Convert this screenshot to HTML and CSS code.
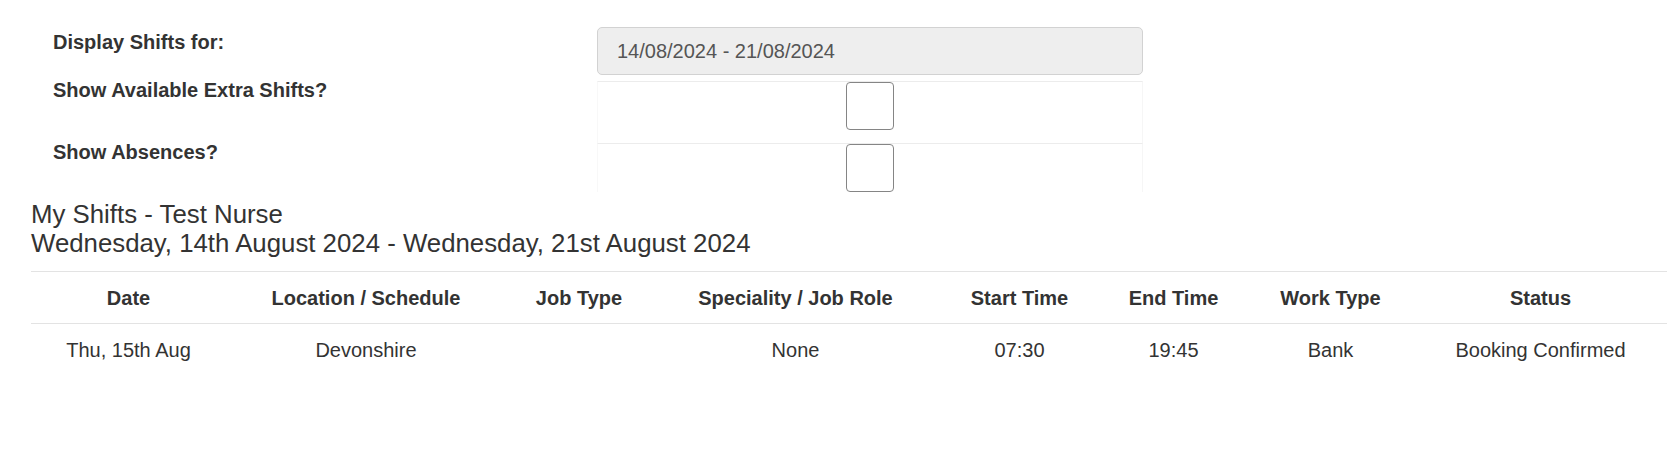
FILE: index.html
```html
<!DOCTYPE html>
<html lang="en">
<head>
<meta charset="utf-8">
<title>My Shifts</title>
<link rel="stylesheet" href="styles.css">
</head>
<body>
<div class="page">
  <form class="filters">
    <div class="frow frow-first">
      <label class="flabel flabel-first">Display Shifts for:</label>
      <div class="fctl">
        <input class="date-range" type="text" value="14/08/2024 - 21/08/2024" readonly>
      </div>
    </div>
    <div class="frow">
      <label class="flabel">Show Available Extra Shifts?</label>
      <div class="fctl fcell fcell-tall">
        <input class="chk" type="checkbox">
      </div>
    </div>
    <div class="frow">
      <label class="flabel">Show Absences?</label>
      <div class="fctl fcell fcell-short">
        <input class="chk" type="checkbox">
      </div>
    </div>
  </form>

  <h3 class="title">My Shifts - Test Nurse<br>Wednesday, 14th August 2024 - Wednesday, 21st August 2024</h3>

  <table class="shifts">
    <colgroup>
      <col class="c-date">
      <col class="c-loc">
      <col class="c-job">
      <col class="c-spec">
      <col class="c-start">
      <col class="c-end">
      <col class="c-work">
      <col class="c-status">
    </colgroup>
    <thead>
      <tr>
        <th>Date</th>
        <th>Location / Schedule</th>
        <th>Job Type</th>
        <th>Speciality / Job Role</th>
        <th>Start Time</th>
        <th>End Time</th>
        <th>Work Type</th>
        <th>Status</th>
      </tr>
    </thead>
    <tbody>
      <tr>
        <td>Thu, 15th Aug</td>
        <td>Devonshire</td>
        <td></td>
        <td>None</td>
        <td>07:30</td>
        <td>19:45</td>
        <td>Bank</td>
        <td>Booking Confirmed</td>
      </tr>
    </tbody>
  </table>
</div>
</body>
</html>
```

FILE: styles.css
```css
* { box-sizing: border-box; }

html, body {
  margin: 0;
  padding: 0;
  background: #fff;
}

body {
  font-family: "Liberation Sans", Arial, Helvetica, sans-serif;
  font-size: 20px;
  color: #333;
}

.page {
  padding: 27px 13px 0 31px;
}

.filters {
  margin: 0;
}

.frow {
  display: grid;
  grid-template-columns: 566px 546px;
  align-items: start;
}

.frow-first {
  margin-bottom: 6px;
}

.flabel {
  display: block;
  padding-left: 22px;
  font-weight: bold;
  line-height: 18px;
  color: #333;
}

.flabel-first {
  padding-top: 6px;
}

.fctl {
  display: flex;
  justify-content: center;
  align-items: flex-start;
}

.date-range {
  display: block;
  width: 100%;
  height: 48px;
  margin: 0;
  padding: 0 19px;
  border: 1px solid #d2d2d2;
  border-radius: 5px;
  background: #eeeeee;
  font-family: "Liberation Sans", Arial, Helvetica, sans-serif;
  font-size: 20px;
  color: #555;
  outline: none;
}

.fcell {
  border-top: 1px solid #ececec;
  border-left: 1px solid #f8f8f8;
  border-right: 1px solid #f6f6f6;
}

.fcell-tall { height: 62px; }
.fcell-short { height: 49px; }

.chk {
  -webkit-appearance: none;
  appearance: none;
  display: block;
  width: 48px;
  height: 48px;
  margin: 0;
  border: 1.5px solid #858585;
  border-radius: 4px;
  background: #fff;
}

.title {
  margin: 8px 0 0;
  font-size: 25.8px;
  font-weight: normal;
  line-height: 29px;
  color: #333;
}

.shifts {
  margin-top: 13px;
  width: 1636px;
  border-collapse: collapse;
  table-layout: fixed;
}

.c-date { width: 195px; }
.c-loc { width: 280px; }
.c-job { width: 146px; }
.c-spec { width: 287px; }
.c-start { width: 161px; }
.c-end { width: 147px; }
.c-work { width: 167px; }
.c-status { width: 253px; }

.shifts th,
.shifts td {
  padding: 12px 4px 11px;
  line-height: 28px;
  text-align: center;
  white-space: nowrap;
  border-top: 1px solid #e3e3e3;
}

.shifts th {
  font-weight: bold;
  color: #333;
}

.shifts td {
  color: #333;
}
```
